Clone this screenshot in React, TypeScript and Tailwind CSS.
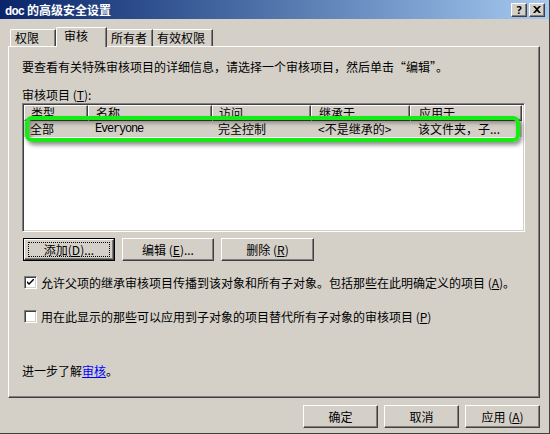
import React from "react";

const raised =
  "border-t border-l border-t-white border-l-white border-r border-b border-r-[#404040] border-b-[#404040] shadow-[inset_-1px_-1px_0_#808080] bg-[#d4d0c8]";

function Btn({ children, w, isDefault }: { children: React.ReactNode; w: string; isDefault?: boolean }) {
  if (isDefault) {
    return (
      <div className={`relative ${w} h-[23px] border border-black flex`}>
        <div className={`flex-1 ${raised} flex items-center justify-center`}>{children}</div>
        <div className="absolute left-[4px] right-[4px] top-[3px] bottom-[3px] border border-dotted border-black" />
      </div>
    );
  }
  return <div className={`${w} h-[23px] ${raised} flex items-center justify-center`}>{children}</div>;
}

function CheckBox({ checked }: { checked?: boolean }) {
  return (
    <div className="w-[13px] h-[13px] bg-white border-t border-l border-t-[#808080] border-l-[#808080] border-r border-b border-r-white border-b-white shadow-[inset_1px_1px_0_#404040,inset_-1px_-1px_0_#d4d0c8] flex items-center justify-center shrink-0">
      {checked && (
        <svg width="7" height="7" viewBox="0 0 7 7">
          <path d="M0 2 L0 4 L2 6 L7 1 L7 -1 L2 4 Z" fill="black" />
        </svg>
      )}
    </div>
  );
}

export default function App() {
  const cols = [
    { w: "w-[64px]", h: "类型", v: "全部", pl: "pl-[6px]" },
    { w: "w-[124px]", h: "名称", v: "Everyone", pl: "pl-[7px]", mono: true },
    { w: "w-[99px]", h: "访问", v: "完全控制", pl: "pl-[6px]" },
    { w: "w-[99px]", h: "继承于", v: "<不是继承的>", pl: "pl-[7px]" },
    { w: "w-[112px]", h: "应用于", v: "该文件夹，子...", pl: "pl-[8px]" },
  ];
  return (
    <div className="relative w-[550px] h-[434px] bg-[#d4d0c8] border-r border-b border-[#404040] text-[12px] leading-[14px] text-black font-['Noto_Sans_CJK_SC',sans-serif] overflow-hidden flex flex-col">
      {/* Title bar */}
      <div className="h-[19px] flex items-center bg-linear-to-r from-[#0a246a] to-[#a6caf0] pl-[5px] pr-[4px] shrink-0">
        <div className="text-white font-bold text-[12px] leading-[14px] pt-[2px] flex-1">
          <span className="font-['Liberation_Mono'] tracking-[-0.8px]">doc</span> 的高级安全设置
        </div>
        <div className={`w-[16px] h-[14px] ${raised} flex items-center justify-center text-[11px] font-bold leading-none font-sans`}>?</div>
        <div className={`w-[16px] h-[14px] ml-[2px] ${raised} flex items-center justify-center`}>
          <svg width="8" height="7" viewBox="0 0 8 7">
            <path d="M0 0 L2 0 L4 2 L6 0 L8 0 L5 3.5 L8 7 L6 7 L4 5 L2 7 L0 7 L3 3.5 Z" fill="black" />
          </svg>
        </div>
      </div>

      {/* Tabs */}
      <div className="h-[27px] flex items-end pl-[10px] shrink-0">
        <div className="w-[46px] h-[17px] border-t border-l border-white border-r border-r-[#404040] shadow-[inset_-1px_0_0_#808080] rounded-tl-[2px] flex items-center pl-[4px]">权限</div>
        <div className="relative z-10 -mb-[1px] w-[51px] h-[20px] bg-[#d4d0c8] border-t border-l border-white border-r border-r-[#404040] shadow-[inset_-1px_0_0_#808080] rounded-tl-[2px] flex items-center pl-[7px] pb-[4px]">审核</div>
        <div className="w-[46px] h-[17px] border-t border-white border-r border-r-[#404040] shadow-[inset_-1px_0_0_#808080] flex items-center pl-[4px]">所有者</div>
        <div className="w-[60px] h-[17px] border-t border-white border-r border-r-[#404040] shadow-[inset_-1px_0_0_#808080] flex items-center pl-[4px]">有效权限</div>
      </div>

      {/* Panel */}
      <div className="ml-[8px] w-[532px] h-[352px] border-t border-l border-white border-r border-b border-r-[#404040] border-b-[#404040] shadow-[inset_-1px_-1px_0_#808080] pl-[13px] flex flex-col shrink-0">
        <div className="mt-[13px]">要查看有关特殊审核项目的详细信息，请选择一个审核项目，然后单击“编辑”。</div>
        <div className="mt-[14px]">
          审核项目 (<span className="underline">T</span>):
        </div>
        <div className="mt-[1px] w-[503px] h-[129px] bg-white border-t border-l border-t-[#808080] border-l-[#808080] border-r border-b border-r-white border-b-white shadow-[inset_1px_1px_0_#404040,inset_-1px_-1px_0_#d4d0c8] p-[1px] flex flex-col">
          <div className="flex h-[16px]">
            {cols.map((c) => (
              <div key={c.h} className={`${c.w} h-[16px] ${raised} ${c.pl} flex items-center`}>
                {c.h}
              </div>
            ))}
          </div>
          <div className="flex h-[16px] bg-[#d4d0c8] w-[498px]">
            {cols.map((c) => (
              <div key={c.h} className={`${c.w} h-[16px] ${c.pl} flex items-center whitespace-nowrap`}>
                {c.mono ? <span className="font-['Liberation_Mono'] tracking-[-1.2px]">{c.v}</span> : c.v}
              </div>
            ))}
          </div>
        </div>

        <div className="mt-[6px] ml-[1px] flex gap-[7px]">
          <Btn w="w-[92px]" isDefault>
            添加(<span className="underline">D</span>)...
          </Btn>
          <Btn w="w-[92px]">
            编辑 (<span className="underline">E</span>)...
          </Btn>
          <Btn w="w-[93px]">
            删除 (<span className="underline">R</span>)
          </Btn>
        </div>

        <div className="mt-[15px] ml-[2px] flex items-center gap-[4px] h-[13px]">
          <CheckBox checked />
          <span className="whitespace-nowrap">
            允许父项的继承审核项目传播到该对象和所有子对象。包括那些在此明确定义的项目 (<span className="underline">A</span>)。
          </span>
        </div>
        <div className="mt-[21px] ml-[2px] flex items-center gap-[4px] h-[13px]">
          <CheckBox />
          <span className="whitespace-nowrap">
            用在此显示的那些可以应用到子对象的项目替代所有子对象的审核项目 (<span className="underline">P</span>)
          </span>
        </div>

        <div className="mt-[41px]">
          进一步了解<span className="text-[#0000ff] underline">审核</span>。
        </div>
      </div>

      {/* Bottom buttons */}
      <div className="mt-[7px] flex justify-end gap-[6px] pr-[9px]">
        <Btn w="w-[75px]">确定</Btn>
        <Btn w="w-[75px]">取消</Btn>
        <Btn w="w-[75px]">
          应用 (<span className="underline">A</span>)
        </Btn>
      </div>

      {/* Green annotation highlight */}
      <div className="absolute left-[25px] top-[116px] w-[495px] h-[26px] border-[4px] border-[#14ec14] rounded-[7px] shadow-[2px_3px_4px_rgba(0,0,0,0.45),inset_2px_3px_4px_rgba(0,0,0,0.35)] pointer-events-none" />
    </div>
  );
}
